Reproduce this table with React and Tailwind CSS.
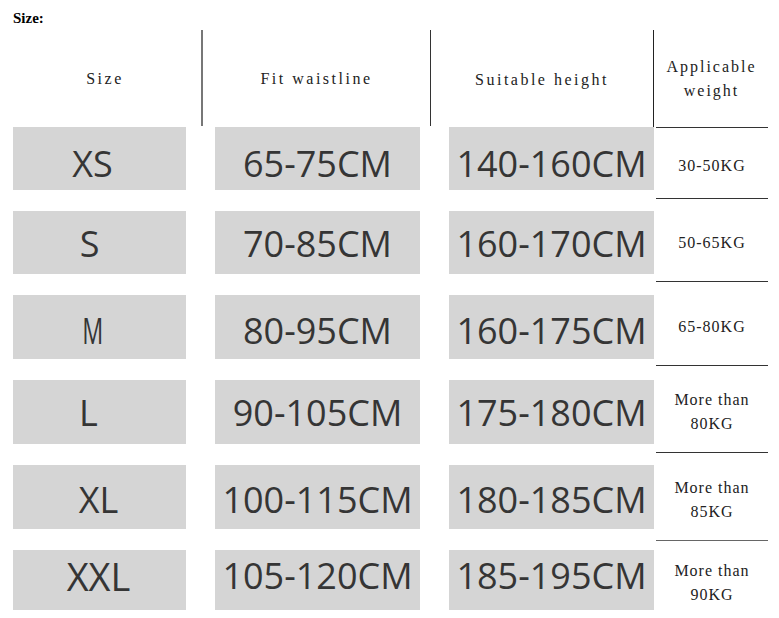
import React from 'react';

const rows = [
  { size: 'XS', waist: '65-75CM', height: '140-160CM', box: 'h-[63px] pt-[10px]', sizeCls: 'pr-[14px]' },
  { size: 'S', waist: '70-85CM', height: '160-170CM', box: 'h-[63px] pt-[2px]', sizeCls: 'pr-[20px]' },
  { size: 'M', waist: '80-95CM', height: '160-175CM', box: 'h-[64px] pt-[8px]', sizeCls: 'pr-[20px] scale-x-[0.65]' },
  { size: 'L', waist: '90-105CM', height: '175-180CM', box: 'h-[64px] pt-[1px]', sizeCls: 'pr-[22px]' },
  { size: 'XL', waist: '100-115CM', height: '180-185CM', box: 'h-[64px] pt-[6px]', sizeCls: 'pr-[2px]' },
  { size: 'XXL', waist: '105-120CM', height: '185-195CM', box: 'h-[60px] pb-[8px]', sizeCls: 'pr-[2px] text-[38px]' },
];

const weights = [
  { lines: ['30-50KG'], h: 'h-[71px] border-[#333]' },
  { lines: ['50-65KG'], h: 'h-[83px] border-[#333]' },
  { lines: ['65-80KG'], h: 'h-[84px] border-[#333]' },
  { lines: ['More than', '80KG'], h: 'h-[87px] border-[#333]' },
  { lines: ['More than', '85KG'], h: 'h-[88px] border-[#333]' },
  { lines: ['More than', '90KG'], h: 'h-[78px] border-[#666]' },
];

const serif = { fontFamily: '"Liberation Serif", "Times New Roman", serif' };
const sans = { fontFamily: '"Open Sans", "Noto Sans", sans-serif' };

function Box({ children, width, extra, textCls = '' }) {
  return (
    <div className={`${width} ${extra} bg-[#d5d5d5] flex items-center justify-center`}>
      <span className={`block text-[36px] leading-[36px] font-medium text-[#353535] whitespace-nowrap ${textCls}`} style={sans}>
        {children}
      </span>
    </div>
  );
}

export default function App() {
  return (
    <div className="w-[779px] h-[618px] bg-white overflow-hidden">
      <div className="h-[30px] pt-[11px] pl-[13px]">
        <div className="text-[15px] leading-[15px] font-bold text-black" style={serif}>
          Size:
        </div>
      </div>

      {/* header */}
      <div className="flex h-[97px] pl-[13px] text-[16px] tracking-[2.5px] text-[#222]" style={serif}>
        <div className="w-[190px] h-[96px] pt-[2px] pr-[4px] border-r-2 border-[#777] flex items-center justify-center">
          Size
        </div>
        <div className="w-[228px] h-[96px] pt-[2px] border-r border-[#333] flex items-center justify-center">
          Fit waistline
        </div>
        <div className="w-[223px] h-[97px] pt-[2px] border-r border-[#222] flex items-center justify-center">
          Suitable height
        </div>
        <div className="w-[115px] h-[97px] flex flex-col items-center justify-center leading-[24px] tracking-[2px]">
          <span>Applicable</span>
          <span>weight</span>
        </div>
      </div>

      {/* body */}
      <div className="flex pl-[13px]">
        <div className="flex flex-col gap-[21px]">
          {rows.map((r) => (
            <div key={r.size} className="flex gap-[29px]">
              <Box width="w-[173px]" extra={r.box} textCls={r.sizeCls}>{r.size}</Box>
              <Box width="w-[205px]" extra={r.box}>{r.waist}</Box>
              <Box width="w-[205px]" extra={r.box}>{r.height}</Box>
            </div>
          ))}
        </div>
        <div className="w-[115px] pl-[2px] pr-[1px] flex flex-col">
          {weights.map((w, i) => (
            <div
              key={i}
              className={`${w.h} border-t flex flex-col items-center justify-center pt-[6px] text-[16px] leading-[24px] tracking-[1px] text-[#222]`}
              style={serif}
            >
              {w.lines.map((l) => (
                <span key={l} className="whitespace-pre">{l}</span>
              ))}
            </div>
          ))}
        </div>
      </div>
    </div>
  );
}
